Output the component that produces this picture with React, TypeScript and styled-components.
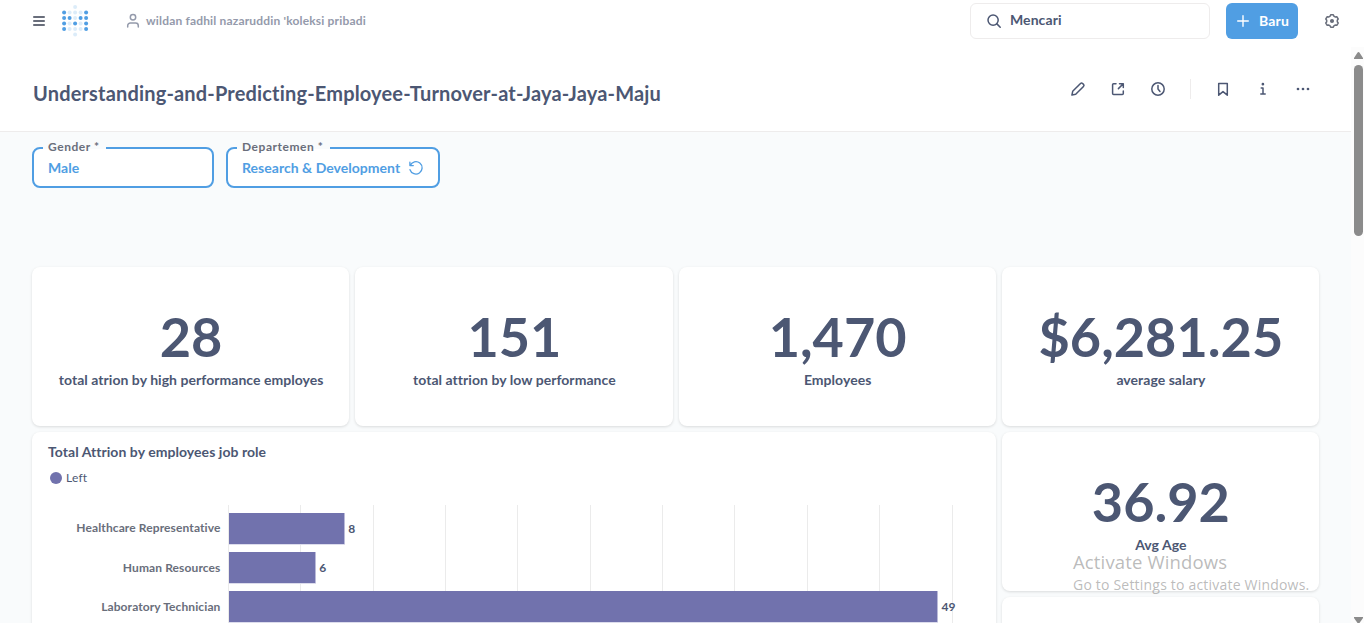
import React from "react";
import styled, { createGlobalStyle } from "styled-components";

const Global = createGlobalStyle`
  * { box-sizing: border-box; }
  html, body { margin: 0; padding: 0; overflow: hidden; }
  body { font-family: Lato, "Liberation Sans", sans-serif; color: #4c5773; background: #fff; }
`;

const Page = styled.div`
  position: relative;
  width: 1364px;
  height: 623px;
  overflow: hidden;
  display: flex;
  flex-direction: column;
  background: #fff;
`;

const AppBar = styled.header`
  height: 47px;
  flex: none;
  display: flex;
  align-items: flex-start;
  padding: 0 24px 0 32px;
`;

const BarGroup = styled.div`
  height: 42px;
  display: flex;
  align-items: center;
`;

const Breadcrumb = styled.div`
  display: flex;
  align-items: center;
  gap: 6px;
  margin-left: 35px;
  color: #949aab;
  font-size: 12px;
  letter-spacing: 0.17px;
  font-weight: 700;
  line-height: 16px;
  white-space: nowrap;
`;

const Logo = styled.svg`
  margin-left: 14px;
  display: block;
`;

const BarRight = styled(BarGroup)`
  margin-left: auto;
`;

const Search = styled.div`
  width: 240px;
  height: 36px;
  border: 1px solid #eeecec;
  border-radius: 6px;
  display: flex;
  align-items: center;
  gap: 9px;
  padding: 0 15px 3px 16px;
  font-size: 14px;
  line-height: 17px;
  font-weight: 700;
  letter-spacing: 0.08px;

  svg {
    margin-top: 3px;
  }
`;

const NewButton = styled.button`
  width: 72px;
  height: 36px;
  margin: 0 26px 0 16px;
  padding: 0 9px 1px 11px;
  border: 0;
  border-radius: 6px;
  display: flex;
  align-items: center;
  justify-content: space-between;
  background: #509ee3;
  color: #fff;
  font: 700 14px Lato, sans-serif;
  letter-spacing: 0.15px;
`;

const Scroller = styled.div`
  flex: 1;
  min-height: 0;
  display: flex;
`;

const Content = styled.main`
  width: 1351px;
  height: 576px;
  overflow: hidden;
  background: #f9fbfc;
`;

const TitleBar = styled.div`
  height: 85px;
  display: flex;
  justify-content: space-between;
  padding: 0 40px 0 33px;
  background: #fff;
  border-bottom: 1px solid #eeecec;
`;

const Title = styled.h1`
  margin: 0;
  padding-top: 34px;
  font-size: 20px;
  line-height: 24px;
  font-weight: 700;
  letter-spacing: 0.17px;
`;

const Actions = styled.div`
  display: flex;
  align-items: center;
  height: 84px;
  gap: 24px;
`;

const Divider = styled.span`
  width: 1px;
  height: 20px;
  background: #eeecec;
`;

const Filters = styled.div`
  height: 135px;
  display: flex;
  gap: 12px;
  padding: 15px 32px 0;
`;

const Filter = styled.div<{ $width: number }>`
  position: relative;
  width: ${(p) => p.$width}px;
  height: 41px;
  border: 2px solid #509ee3;
  border-radius: 8px;
  background: #fff;
  display: flex;
  align-items: center;
  justify-content: space-between;
  padding: 0 14px;
  color: #509ee3;
  font-size: 14px;
  font-weight: 700;
  letter-spacing: 0.03px;
  white-space: nowrap;
`;

const FilterLabel = styled.span`
  position: absolute;
  left: 9px;
  top: -9px;
  height: 14px;
  padding: 0 6px 0 5px;
  line-height: 14px;
  font-size: 12px;
  letter-spacing: 0.55px;
  color: #696e7b;
  background: linear-gradient(#f9fbfc 0 9px, #fff 9px);
`;

const Grid = styled.div`
  width: 1287px;
  margin-left: 32px;
  display: grid;
  grid-template-columns: repeat(4, 1fr);
  grid-auto-rows: 159px;
  gap: 6px;
`;

const Card = styled.section`
  background: #fff;
  border-radius: 8px;
  box-shadow: 0 1px 3px rgba(0, 0, 0, 0.13);
`;

const MetricCard = styled(Card)`
  display: flex;
  flex-direction: column;
  align-items: center;
  padding: 36px 0 0 1px;
`;

const MetricValue = styled.div`
  font-size: 54px;
  line-height: 68px;
  font-weight: 700;
`;

const MetricLabel = styled.div`
  font-size: 14px;
  line-height: 18px;
  font-weight: 700;
  letter-spacing: 0.04px;
`;

const ChartCard = styled(Card)`
  grid-column: span 3;
  grid-row: span 2;
  padding: 11px 16px 0;
  overflow: hidden;
`;

const ChartTitle = styled.div`
  font-size: 14px;
  line-height: 18px;
  font-weight: 700;
  letter-spacing: 0.05px;
`;

const Legend = styled.div`
  display: flex;
  align-items: center;
  gap: 4px;
  margin: 9px 0 0 2px;
  font-size: 12px;
  line-height: 16px;
  letter-spacing: 0.2px;
`;

const Dot = styled.span`
  width: 12px;
  height: 12px;
  border-radius: 50%;
  background: #7172ad;
`;

const Chart = styled.svg`
  display: block;
  margin-top: 19px;
  font-family: Lato, sans-serif;
  font-size: 12px;
  font-weight: 700;
`;

const Category = styled.text`
  fill: #696e7b;
  letter-spacing: 0.11px;
`;

const Track = styled.div`
  width: 13px;
  background: #fcfcfc;
  display: flex;
  flex-direction: column;
  align-items: center;
  padding: 5px 0 0 2px;
`;

const Thumb = styled.div`
  width: 9px;
  height: 171px;
  margin-top: 6px;
  margin-bottom: auto;
  border-radius: 5px;
  background: #8b8b8b;
`;

const Watermark = styled.div`
  position: absolute;
  left: 1073px;
  top: 554px;
  color: rgba(130, 130, 130, 0.55);
  font-family: "Open Sans", "Noto Sans", sans-serif;
  white-space: nowrap;
`;

const WatermarkTitle = styled.div`
  font-size: 18.5px;
  line-height: 16px;
  margin-bottom: 6px;
  font-weight: 400;
  letter-spacing: 0.15px;
`;

const WatermarkText = styled.div`
  font-size: 14px;
  line-height: 18px;
  letter-spacing: 0.2px;
`;

const Icon = ({ size = 16, color = "#4c5773", children }: { size?: number; color?: string; children: React.ReactNode }) => (
  <svg width={size} height={size} viewBox="0 0 16 16" fill="none" stroke={color} strokeWidth="1.5" strokeLinecap="round" strokeLinejoin="round">
    {children}
  </svg>
);

const logoRows = ["  o  ", "XoooX", "XXoXX", "XoXoX", "XoooX", "  o  "];

const bars = [
  { name: "Healthcare Representative", value: 8 },
  { name: "Human Resources", value: 6 },
  { name: "Laboratory Technician", value: 49 },
];

const metrics = [
  { value: "28", label: "total atrion by high performance employes" },
  { value: "151", label: "total attrion by low performance" },
  { value: "1,470", label: "Employees" },
  { value: "$6,281.25", label: "average salary" },
];

const Metric = ({ value, label }: { value: string; label: string }) => (
  <MetricCard>
    <MetricValue>{value}</MetricValue>
    <MetricLabel>{label}</MetricLabel>
  </MetricCard>
);

const BarChart = () => (
  <Chart width="932" height="240" viewBox="0 0 932 240">
    {Array.from({ length: 11 }, (_, i) => (
      <rect key={i} x={Math.round(180 + i * 72.35)} y="0" width="1" height="240" fill="#ebebeb" />
    ))}
    {bars.map((b, i) => {
      const y = 8 + i * 39.2;
      const w = b.value * 14.47;
      return (
        <g key={b.name}>
          <rect x="181" y={Math.round(y)} width={Math.round(w)} height="32" fill="#dcdcec" />
          <rect x="181" y={Math.round(y)} width={Math.round(w) - 0.7} height="31" fill="#7172ad" />
          <Category x="172.5" y={Math.round(y) + (i ? 20 : 19)} textAnchor="end">{b.name}</Category>
          <text x={184.5 + w} y={Math.round(y) + 20} fill="#4c5773">{b.value}</text>
        </g>
      );
    })}
  </Chart>
);

export default function App() {
  return (
    <Page>
      <Global />
      <AppBar>
        <BarGroup>
          <svg width="14" height="14" viewBox="0 0 14 14" stroke="#696e7b" strokeWidth="1.8" strokeLinecap="round">
            <path d="M1.9 3h10.2M1.9 7h10.2M1.9 11h10.2" />
          </svg>
          <Logo width="31" height="34" viewBox="0 0 31 34">
            {logoRows.flatMap((row, r) =>
              row.split("").map((c, i) =>
                c === " " ? null : (
                  <circle key={`${r}-${i}`} cx={4.1 + i * 5.5} cy={3 + r * 5.5} r="2" fill="#509ee3" opacity={c === "X" ? 1 : 0.2} />
                )
              )
            )}
          </Logo>
          <Breadcrumb>
            <svg width="14" height="16" viewBox="0 0 14 16" fill="none" stroke="#949aab" strokeWidth="1.5" strokeLinecap="round">
              <circle cx="7" cy="4.3" r="2.7" />
              <path d="M1.7 14v-1.3a2.7 2.7 0 0 1 2.7-2.7h5.2a2.7 2.7 0 0 1 2.7 2.7V14" />
            </svg>
            wildan fadhil nazaruddin 'koleksi pribadi
          </Breadcrumb>
        </BarGroup>
        <BarRight>
          <Search>
            <svg width="14" height="14" viewBox="0 0 14 14" fill="none" stroke="#4c5773" strokeWidth="1.5" strokeLinecap="round">
              <circle cx="6.1" cy="6.1" r="5.1" />
              <path d="M9.9 9.9l3.3 3.3" />
            </svg>
            Mencari
          </Search>
          <NewButton>
            <svg width="12" height="12" viewBox="0 0 12 12" stroke="#fff" strokeWidth="1.4" strokeLinecap="round">
              <path d="M6 .7v10.6M.7 6h10.6" />
            </svg>
            Baru
          </NewButton>
          <Icon color="#696e7b">
            <path d="M6.7 1.7h2.6l.6 1.5 1.2.7 1.7-.2 1.4 2.3-.9 1.3v1.4l.9 1.3-1.4 2.3-1.7-.2-1.2.7-.6 1.5H6.7l-.6-1.5-1.2-.7-1.7.2L1.8 10l.9-1.3V7.3L1.8 6l1.4-2.3 1.7.2 1.2-.7z" />
            <circle cx="8" cy="8" r="1.3" fill="#696e7b" />
          </Icon>
        </BarRight>
      </AppBar>

      <Scroller>
        <Content>
          <TitleBar>
            <Title>Understanding-and-Predicting-Employee-Turnover-at-Jaya-Jaya-Maju</Title>
            <Actions>
              <Icon>
                <path d="M1.9 14.1l.8-3.8 7.8-7.8a1.5 1.5 0 0 1 2.1 0l.9.9a1.5 1.5 0 0 1 0 2.1l-7.8 7.8z" />
              </Icon>
              <Icon>
                <path d="M6 2.7H3.6a1 1 0 0 0-1 1v8.7a1 1 0 0 0 1 1h8.7a1 1 0 0 0 1-1V10M9.5 2.7h3.8v3.8M13 3L8.4 7.6" />
              </Icon>
              <Icon>
                <circle cx="8" cy="8" r="6.2" />
                <path d="M8 4.5V8l2 2.4" />
              </Icon>
              <Divider />
              <Icon>
                <path d="M3.7 2.5h8.6v11.7L8 10.6l-4.3 3.6z" />
              </Icon>
              <Icon>
                <path d="M6.2 6.9H8v5.7M5.8 12.9h4.4" />
                <circle cx="7.9" cy="3.2" r=".6" fill="#4c5773" />
              </Icon>
              <Icon>
                <g fill="#4c5773" stroke="none">
                  <circle cx="3" cy="8" r="1.35" />
                  <circle cx="8" cy="8" r="1.35" />
                  <circle cx="13" cy="8" r="1.35" />
                </g>
              </Icon>
            </Actions>
          </TitleBar>

          <Filters>
            <Filter $width={182}>
              <FilterLabel>Gender *</FilterLabel>
              Male
            </Filter>
            <Filter $width={214}>
              <FilterLabel>Departemen *</FilterLabel>
              Research &amp; Development
              <Icon color="#509ee3">
                <path d="M1.9 2.2v3.4h3.4M2.2 5.4A6.2 6.2 0 1 1 2 9.7" strokeWidth="1.3" />
              </Icon>
            </Filter>
          </Filters>

          <Grid>
            {metrics.map((m) => (
              <Metric key={m.label} {...m} />
            ))}
            <ChartCard>
              <ChartTitle>Total Attrion by employees job role</ChartTitle>
              <Legend>
                <Dot />
                Left
              </Legend>
              <BarChart />
            </ChartCard>
            <Metric value="36.92" label="Avg Age" />
            <Card />
          </Grid>
        </Content>
        <Track>
          <svg width="9" height="7" viewBox="0 0 9 7" fill="#8b8b8b">
            <path d="M4.5 0Q5.1 0 5.6.8L9 6v1H0V6L3.4.8Q3.9 0 4.5 0z" />
          </svg>
          <Thumb />
          <svg width="9" height="6" viewBox="0 0 9 6" fill="#8b8b8b">
            <path d="M0 0h9v1L5.5 6h-2L0 1z" />
          </svg>
        </Track>
      </Scroller>

      <Watermark>
        <WatermarkTitle>Activate Windows</WatermarkTitle>
        <WatermarkText>Go to Settings to activate Windows.</WatermarkText>
      </Watermark>
    </Page>
  );
}
